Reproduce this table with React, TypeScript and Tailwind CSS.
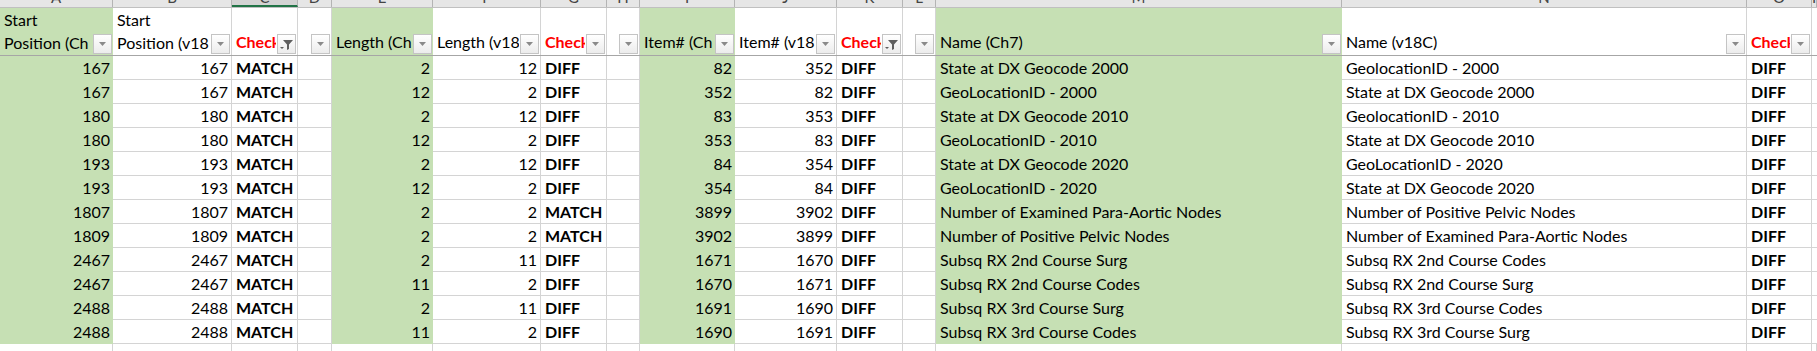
import React from 'react';

type Col = {
  letter: string;
  w: string;
  green?: boolean;
  num?: boolean;
  bold?: boolean;
  h1?: string;
  h2?: string;
  red?: boolean;
  filter?: 'plain' | 'active' | 'none';
  selected?: boolean;
};

const cols: Col[] = [
  { letter: 'A', w: 'w-[113px]', green: true, num: true, h1: 'Start', h2: 'Position (Ch', filter: 'plain' },
  { letter: 'B', w: 'w-[119px]', num: true, h1: 'Start', h2: 'Position (v18', filter: 'plain' },
  { letter: 'C', w: 'w-[66px]', bold: true, h2: 'Check', red: true, filter: 'active', selected: true },
  { letter: 'D', w: 'w-[34px]', filter: 'plain' },
  { letter: 'E', w: 'w-[101px]', green: true, num: true, h2: 'Length (Ch', filter: 'plain' },
  { letter: 'F', w: 'w-[108px]', num: true, h2: 'Length (v18', filter: 'plain' },
  { letter: 'G', w: 'w-[66px]', bold: true, h2: 'Check', red: true, filter: 'plain' },
  { letter: 'H', w: 'w-[33px]', filter: 'plain' },
  { letter: 'I', w: 'w-[95px]', green: true, num: true, h2: 'Item# (Ch', filter: 'plain' },
  { letter: 'J', w: 'w-[102px]', num: true, h2: 'Item# (v18', filter: 'plain' },
  { letter: 'K', w: 'w-[66px]', bold: true, h2: 'Check', red: true, filter: 'active' },
  { letter: 'L', w: 'w-[33px]', filter: 'plain' },
  { letter: 'M', w: 'w-[406px]', green: true, h2: 'Name (Ch7)', filter: 'plain' },
  { letter: 'N', w: 'w-[405px]', h2: 'Name (v18C)', filter: 'plain' },
  { letter: 'O', w: 'w-[65px]', bold: true, h2: 'Check', red: true, filter: 'plain' },
  { letter: 'P', w: 'flex-1', filter: 'none' },
];

const rows: string[][] = [
  ['167', '167', 'MATCH', '', '2', '12', 'DIFF', '', '82', '352', 'DIFF', '', 'State at DX Geocode 2000', 'GeolocationID - 2000', 'DIFF', ''],
  ['167', '167', 'MATCH', '', '12', '2', 'DIFF', '', '352', '82', 'DIFF', '', 'GeoLocationID - 2000', 'State at DX Geocode 2000', 'DIFF', ''],
  ['180', '180', 'MATCH', '', '2', '12', 'DIFF', '', '83', '353', 'DIFF', '', 'State at DX Geocode 2010', 'GeolocationID - 2010', 'DIFF', ''],
  ['180', '180', 'MATCH', '', '12', '2', 'DIFF', '', '353', '83', 'DIFF', '', 'GeoLocationID - 2010', 'State at DX Geocode 2010', 'DIFF', ''],
  ['193', '193', 'MATCH', '', '2', '12', 'DIFF', '', '84', '354', 'DIFF', '', 'State at DX Geocode 2020', 'GeoLocationID - 2020', 'DIFF', ''],
  ['193', '193', 'MATCH', '', '12', '2', 'DIFF', '', '354', '84', 'DIFF', '', 'GeoLocationID - 2020', 'State at DX Geocode 2020', 'DIFF', ''],
  ['1807', '1807', 'MATCH', '', '2', '2', 'MATCH', '', '3899', '3902', 'DIFF', '', 'Number of Examined Para-Aortic Nodes', 'Number of Positive Pelvic Nodes', 'DIFF', ''],
  ['1809', '1809', 'MATCH', '', '2', '2', 'MATCH', '', '3902', '3899', 'DIFF', '', 'Number of Positive Pelvic Nodes', 'Number of Examined Para-Aortic Nodes', 'DIFF', ''],
  ['2467', '2467', 'MATCH', '', '2', '11', 'DIFF', '', '1671', '1670', 'DIFF', '', 'Subsq RX 2nd Course Surg', 'Subsq RX 2nd Course Codes', 'DIFF', ''],
  ['2467', '2467', 'MATCH', '', '11', '2', 'DIFF', '', '1670', '1671', 'DIFF', '', 'Subsq RX 2nd Course Codes', 'Subsq RX 2nd Course Surg', 'DIFF', ''],
  ['2488', '2488', 'MATCH', '', '2', '11', 'DIFF', '', '1691', '1690', 'DIFF', '', 'Subsq RX 3rd Course Surg', 'Subsq RX 3rd Course Codes', 'DIFF', ''],
  ['2488', '2488', 'MATCH', '', '11', '2', 'DIFF', '', '1690', '1691', 'DIFF', '', 'Subsq RX 3rd Course Codes', 'Subsq RX 3rd Course Surg', 'DIFF', ''],
];

function FilterButton({ active }: { active: boolean }) {
  return (
    <div className="absolute right-px bottom-px w-[19px] h-[20px] border border-[#c4c4c4] bg-gradient-to-b from-[#ffffff] to-[#ececec] flex items-center justify-center">
      {active ? (
        <svg width="15" height="13" viewBox="0 0 15 13">
          <path d="M4 2 H14 L10 6.5 V11 L8 12 V6.5 Z" fill="#5f5f5f" />
          <path d="M1 9 H5 L3 11 Z" fill="#5f5f5f" />
        </svg>
      ) : (
        <svg width="7" height="4" viewBox="0 0 7 4">
          <path d="M0 0 H7 L3.5 4 Z" fill="#8a8a8a" />
        </svg>
      )}
    </div>
  );
}

export default function App() {
  return (
    <div className="w-[1817px] h-[351px] overflow-hidden bg-white font-['Lato',sans-serif] text-[16px] text-black">
      {/* column letters, only the lower edge shows */}
      <div className="flex h-[8px] bg-[#e6e6e6] border-b border-[#c0c0c0]">
        {cols.map((c) => (
          <div
            key={c.letter}
            className={`${c.w} shrink-0 h-full overflow-hidden border-r border-[#b4b4b4] text-center text-[#444] text-[15px] leading-[15px] ${
              c.selected ? 'bg-[#d3d3d3] border-b-2 border-b-[#217346]' : ''
            }`}
          >
            <div className="-mt-[10px]">{c.letter}</div>
          </div>
        ))}
      </div>

      {/* header row */}
      <div className="flex h-[48px] border-b border-[#a6a6a6]">
        {cols.map((c) => (
          <div
            key={c.letter}
            className={`${c.w} shrink-0 relative flex flex-col justify-end pb-[2px] leading-[23px] whitespace-nowrap ${
              c.green ? 'bg-[#c6e0b4]' : 'border-r border-[#d4d4d4]'
            }`}
          >
            <div className="overflow-hidden pl-[4px] mr-[21px]">
              {c.h1 && <div>{c.h1}</div>}
              {c.h2 && <div className={c.red ? 'text-[#ff0000] font-bold' : ''}>{c.h2}</div>}
            </div>
            {c.filter !== 'none' && <FilterButton active={c.filter === 'active'} />}
          </div>
        ))}
      </div>

      {/* data rows */}
      {rows.map((r, i) => (
        <div key={i} className="flex h-[24px]">
          {cols.map((c, j) => (
            <div
              key={c.letter}
              className={`${c.w} shrink-0 overflow-hidden whitespace-nowrap leading-[23px] px-[4px] ${
                c.green ? 'bg-[#c6e0b4]' : 'border-r border-b border-[#d4d4d4]'
              } ${c.num ? 'text-right pr-[3px]' : ''} ${c.bold ? 'font-bold' : ''}`}
            >
              {r[j]}
            </div>
          ))}
        </div>
      ))}

      {/* blank row */}
      <div className="flex h-[24px]">
        {cols.map((c) => (
          <div key={c.letter} className={`${c.w} shrink-0 border-r border-b border-[#d4d4d4]`} />
        ))}
      </div>
    </div>
  );
}
